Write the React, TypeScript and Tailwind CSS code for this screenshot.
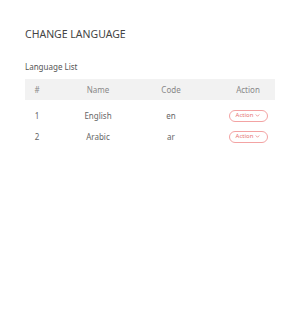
const rows = [
  { id: 1, name: "English", code: "en" },
  { id: 2, name: "Arabic", code: "ar" },
];

export default function App() {
  return (
    <div
      className="min-h-[312px] w-[300px] bg-white px-[25px] pt-[26px] text-[#555]"
      style={{ fontFamily: '"Noto Sans", Arial, sans-serif' }}
    >
      <h1 className="text-[10.5px] leading-[16px] text-[#444]">CHANGE LANGUAGE</h1>

      <p className="mt-[19px] text-[8px] leading-[12px] text-[#555]">Language List</p>

      <div className="mt-[6px] w-[250px]">
        <div className="grid h-[21px] grid-cols-[24px_98px_48px_1fr] items-center bg-[#f2f2f2] text-[8px] text-[#888]">
          <span className="text-center">#</span>
          <span className="text-center">Name</span>
          <span className="text-center">Code</span>
          <span className="pl-[26px] text-center">Action</span>
        </div>

        <div className="pt-[5px]">
          {rows.map((r) => (
            <div
              key={r.id}
              className="grid h-[21px] grid-cols-[24px_98px_48px_1fr] items-center text-[8px] text-[#666]"
            >
              <span className="text-center">{r.id}</span>
              <span className="text-center">{r.name}</span>
              <span className="text-center">{r.code}</span>
              <div className="flex justify-center pl-[26px]">
                <button className="flex h-[12px] w-[39px] items-center justify-center gap-[2px] rounded-full border border-[#f3a3a3] text-[6px] text-[#e57373]">
                  Action
                  <svg width="5" height="5" viewBox="0 0 10 10" fill="none">
                    <path d="M2 3.5 5 6.5 8 3.5" stroke="#e57373" strokeWidth="1.4" strokeLinecap="round" strokeLinejoin="round" />
                  </svg>
                </button>
              </div>
            </div>
          ))}
        </div>
      </div>
    </div>
  );
}
